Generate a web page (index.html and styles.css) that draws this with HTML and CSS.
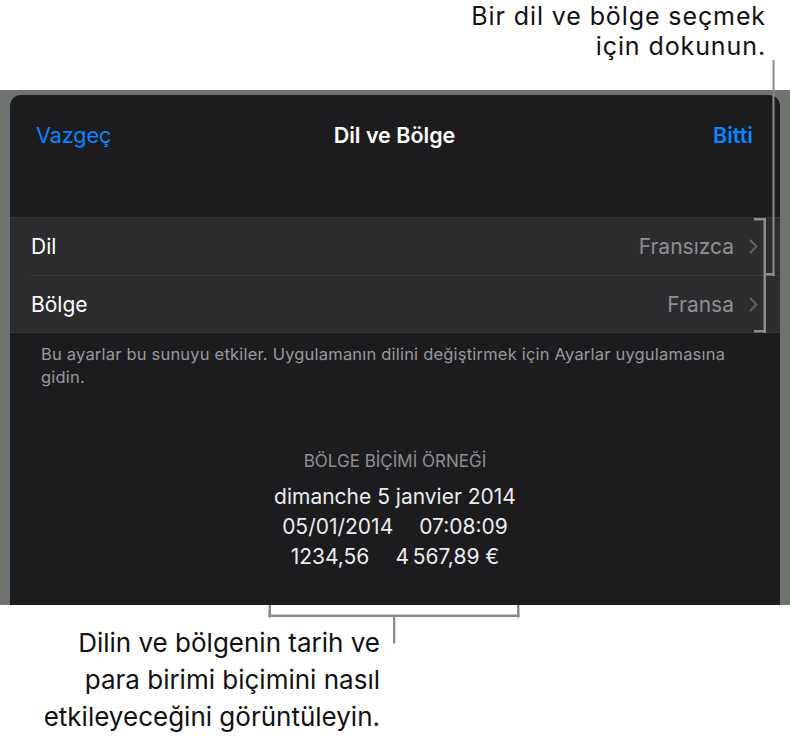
FILE: index.html
```html
<!DOCTYPE html>
<html lang="tr">
<head>
<meta charset="utf-8">
<title>Dil ve Bölge</title>
<link rel="stylesheet" href="styles.css">
</head>
<body>
<div class="page">
  <div class="callout-top">
    <p>Bir dil ve bölge seçmek<br>için dokunun.</p>
  </div>
  <div class="stage">
    <div class="panel">
      <div class="nav">
        <span class="nav-btn">Vazgeç</span>
        <span class="nav-title">Dil ve Bölge</span>
        <span class="nav-btn nav-done">Bitti</span>
      </div>
      <div class="group">
        <div class="row">
          <span class="row-label">Dil</span>
          <span class="row-value">Fransızca</span>
          <svg class="chev" width="9" height="15" viewBox="0 0 9 15"><polyline points="1.5,1.5 7.5,7.5 1.5,13.5" fill="none" stroke="#5f5f64" stroke-width="2.2" stroke-linecap="round" stroke-linejoin="round"/></svg>
        </div>
        <div class="row">
          <span class="row-label">Bölge</span>
          <span class="row-value">Fransa</span>
          <svg class="chev" width="9" height="15" viewBox="0 0 9 15"><polyline points="1.5,1.5 7.5,7.5 1.5,13.5" fill="none" stroke="#5f5f64" stroke-width="2.2" stroke-linecap="round" stroke-linejoin="round"/></svg>
        </div>
      </div>
      <p class="footnote">Bu ayarlar bu sunuyu etkiler. Uygulamanın dilini değiştirmek için Ayarlar uygulamasına gidin.</p>
      <div class="sample">
        <div class="sample-label">BÖLGE BİÇİMİ ÖRNEĞİ</div>
        <div class="sample-line">dimanche 5 janvier 2014</div>
        <div class="sample-line"><span>05/01/2014</span><span class="gap">07:08:09</span></div>
        <div class="sample-line"><span>1234,56</span><span class="gap">4&#8239;567,89&nbsp;€</span></div>
      </div>
    </div>
  </div>
  <div class="callout-bottom">
    <p>Dilin ve bölgenin tarih ve<br>para birimi biçimini nasıl<br>etkileyeceğini görüntüleyin.</p>
  </div>
  <svg class="leaders" width="790" height="739" viewBox="0 0 790 739">
    <g fill="#8c8c8c">
      <rect x="772.5" y="60" width="2" height="216"/>
      <rect x="765" y="273" width="9.5" height="2.5"/>
      <rect x="763.5" y="218" width="2.5" height="115"/>
      <rect x="754" y="218" width="12" height="2.5"/>
      <rect x="754" y="330" width="12" height="2.5"/>
      <rect x="268.5" y="605" width="2.5" height="12.5"/>
      <rect x="517" y="605" width="2.5" height="12.5"/>
      <rect x="268.5" y="614.5" width="251" height="2.5"/>
      <rect x="393" y="616" width="2.3" height="27.5"/>
    </g>
  </svg>
</div>
</body>
</html>
```

FILE: styles.css
```css
* { box-sizing: border-box; }
html, body { margin: 0; padding: 0; background: #ffffff; }
body { font-family: "Inter", "Roboto", "Noto Sans", sans-serif; }

.page {
  position: relative;
  width: 790px;
  height: 739px;
  overflow: hidden;
}

.callout-top {
  height: 90px;
  padding: 1px 24px 0 0;
  text-align: right;
}
.callout-top p {
  margin: 0;
  color: #111;
  font-size: 25px;
  letter-spacing: 0.9px;
  line-height: 30px;
}

.stage {
  background: #6f736e;
  padding: 5px 10px 0 10px;
  height: 515px;
}

.panel {
  background: #1c1c1e;
  border-radius: 11px 11px 0 0;
  height: 510px;
  overflow: hidden;
}

.nav {
  height: 80px;
  display: grid;
  grid-template-columns: 1fr auto 1fr;
  align-items: center;
  padding: 0 27px 0 26px;
  font-size: 21.5px;
}
.nav-btn { color: #0a84ff; }
.nav-done { text-align: right; font-weight: 600; }
.nav-title { color: #ffffff; font-weight: 600; }

.group {
  margin-top: 42px;
  border-top: 1px solid #38383b;
  border-bottom: 1px solid #38383b;
  background: #2c2c2e;
}
.row {
  height: 57px;
  display: flex;
  align-items: center;
  padding: 0 22px 0 21px;
  font-size: 21px;
}
.row + .row { border-top: 1px solid #3a3a3c; margin-left: 20px; padding-left: 1px; }
.row-label { color: #ffffff; flex: 1; }
.row-value { color: #8e8e93; margin-right: 15px; }
.chev { display: block; }

.footnote {
  margin: 10px 40px 0 31px;
  color: #98989e;
  font-size: 16.5px;
  letter-spacing: 0.2px;
  line-height: 23px;
}

.sample {
  margin-top: 62px;
  text-align: center;
  color: #ececef;
}
.sample-label {
  color: #8e8e93;
  font-size: 17px;
  line-height: 20px;
  margin-bottom: 11px;
}
.sample-line {
  font-size: 21px;
  line-height: 30px;
}
.sample-line .gap { margin-left: 26px; }

.callout-bottom {
  padding: 19px 410px 0 0;
  text-align: right;
}
.callout-bottom p {
  margin: 0;
  color: #111;
  font-size: 26px;
  line-height: 37px;
}

.leaders {
  position: absolute;
  left: 0;
  top: 0;
  pointer-events: none;
}
```
